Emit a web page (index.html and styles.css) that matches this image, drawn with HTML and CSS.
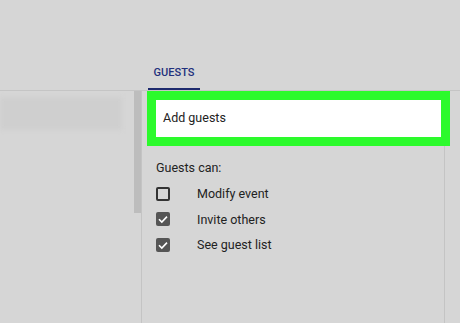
FILE: index.html
```html
<!DOCTYPE html>
<html lang="en">
<head>
  <meta charset="UTF-8" />
  <meta name="viewport" content="width=device-width, initial-scale=1" />
  <title>Guests</title>
  <link rel="stylesheet" href="styles.css">
</head>
<body>
  <header class="topbar">
    <div class="tab">GUESTS</div>
  </header>

  <main class="main">
    <div class="left">
      <div class="band"></div>
    </div>

    <div class="scroll">
      <div class="thumb"></div>
    </div>

    <section class="guests">
      <div class="add-guests">Add guests</div>

      <div class="can-title">Guests can:</div>
      <label class="option">
        <span class="box"></span>
        <span>Modify event</span>
      </label>
      <label class="option">
        <span class="box checked">
          <svg viewBox="0 0 14 14" width="14" height="14"><path d="M3 7.2 L5.8 10 L11 4.6" fill="none" stroke="#fff" stroke-width="1.6"/></svg>
        </span>
        <span>Invite others</span>
      </label>
      <label class="option">
        <span class="box checked">
          <svg viewBox="0 0 14 14" width="14" height="14"><path d="M3 7.2 L5.8 10 L11 4.6" fill="none" stroke="#fff" stroke-width="1.6"/></svg>
        </span>
        <span>See guest list</span>
      </label>
    </section>
  </main>
</body>
</html>
```

FILE: styles.css
```css
body {
  margin: 0;
  width: 460px;
  height: 323px;
  overflow: hidden;
  background-color: #d6d6d6;
  font-family: Roboto, "Liberation Sans", sans-serif;
  color: #222;
}

.topbar {
  height: 90px;
  display: flex;
  align-items: flex-end;
  padding-left: 148px;
  box-sizing: border-box;
}

.tab {
  width: 52px;
  text-align: center;
  font-size: 11px;
  font-weight: 500;
  line-height: 13px;
  color: #22307c;
  padding-bottom: 9px;
  border-bottom: 2px solid #1e2a6e;
}

.main {
  display: flex;
  height: 233px;
  border-top: 1px solid #c5c5c5;
}

/* left list, blurred */
.left {
  width: 134px;
  padding-top: 6px;
}

.band {
  width: 122px;
  height: 33px;
  background-color: #cfcfcf;
  filter: blur(2px);
}

.scroll {
  width: 7px;
  border-right: 1px solid #c4c4c4;
}

.thumb {
  height: 122px;
  background-color: #bdbdbd;
}

/* guests panel */
.guests {
  width: 288px;
  padding: 9px 0 0 14px;
  border-right: 1px solid #c4c4c4;
}

.add-guests {
  width: 278px;
  height: 37px;
  line-height: 36px;
  padding-left: 7px;
  background-color: #fff;
  outline: 9px solid #2cfa2c;
  font-size: 12.5px;
}

.can-title {
  margin-top: 23px;
  font-size: 12.5px;
  line-height: 16px;
}

.option {
  display: flex;
  align-items: center;
  gap: 27px;
  height: 25.5px;
  font-size: 12.5px;
}

.option:first-of-type {
  margin-top: 5px;
}

.box {
  width: 14px;
  height: 14px;
  box-sizing: border-box;
  border: 2px solid #333;
  border-radius: 2px;
  display: flex;
  align-items: center;
  justify-content: center;
}

.box.checked {
  border: none;
  background-color: #555;
}
```
